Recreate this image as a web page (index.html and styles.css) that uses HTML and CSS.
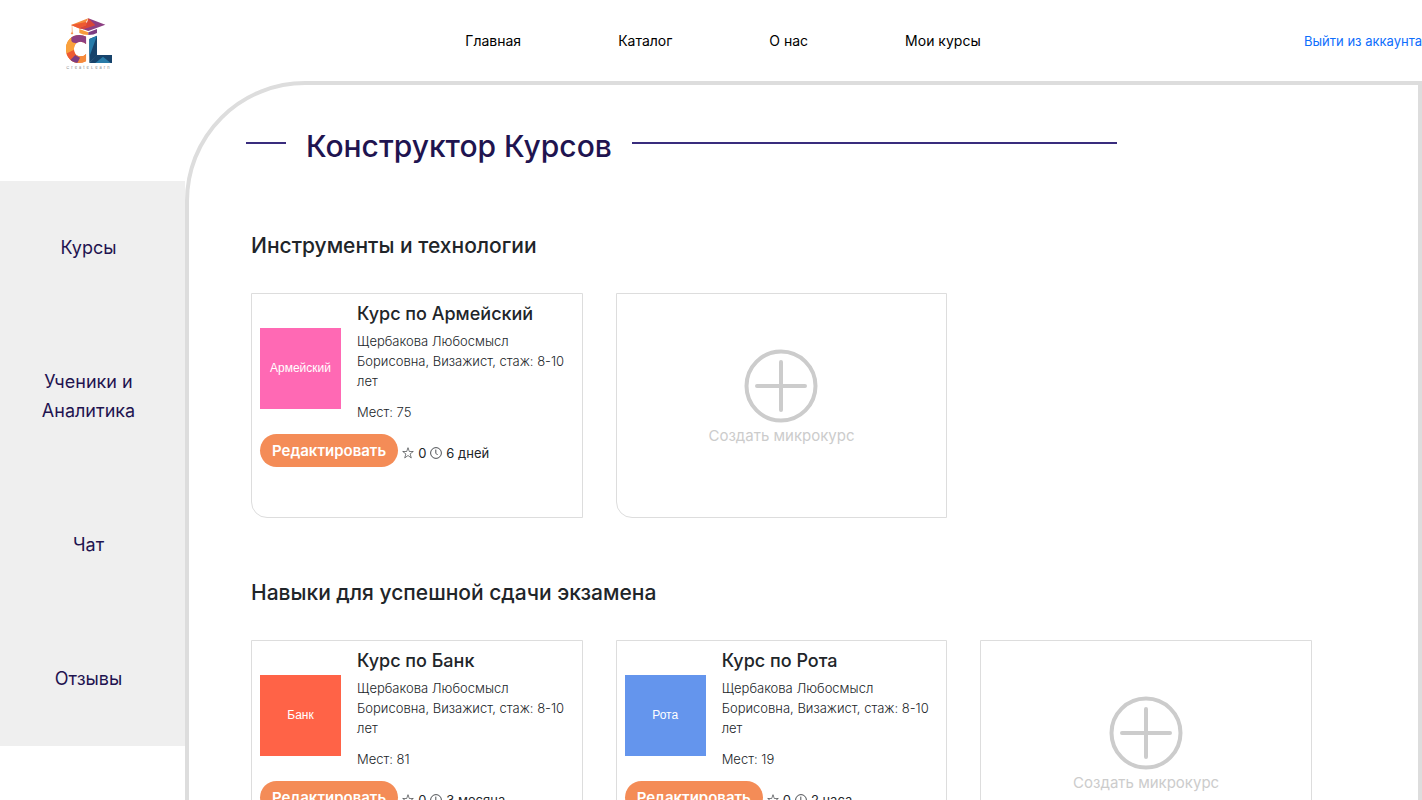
FILE: index.html
```
<!DOCTYPE html>
<html lang="ru">
<head>
<meta charset="utf-8">
<meta name="viewport" content="width=device-width, initial-scale=1">
<title>Конструктор Курсов</title>
<link rel="stylesheet" href="styles.css">
</head>
<body>
<svg class="sprite" aria-hidden="true">
  <symbol id="star" viewBox="0 0 12 12"><path d="M6 .7 7.3 4.5H11.3L8.1 6.9 9.3 10.9 6 8.500 2.700 10.900 3.900 6.900.7 4.500H4.700Z" fill="none" stroke="currentColor" stroke-width=".6"/></symbol>
  <symbol id="clock" viewBox="0 0 12 12"><circle cx="6" cy="6" r="5.4" fill="none" stroke="currentColor" stroke-width=".8"/><path d="M5.8 2.6V6.2L7.6 8" fill="none" stroke="currentColor" stroke-width=".8"/></symbol>
  <symbol id="plus" viewBox="0 0 74 74"><circle cx="37" cy="37" r="34.5" fill="none" stroke="currentColor" stroke-width="4"/><path d="M37 13V61M13 37H61" fill="none" stroke="currentColor" stroke-width="4" stroke-linecap="round"/></symbol>
</svg>

<header class="header">
  <a class="logo" href="#" aria-label="CreateLearn">
    <svg class="logo-mark" viewBox="48 29 138 135" aria-hidden="true">
      <defs><clipPath id="c"><path d="M109 85Q99 80 88 80C64 80 48 98 48 122C48 147 64 164 87 164Q99 164 109 158V136Q102 144 92 144C80 144 72 135 72 122C72 109 80 100 92 100Q102 100 109 108Z"/></clipPath></defs>
      <path d="M63 50 115 30 104 48 90 61Z" fill="#f58a3c"/>
      <path d="M63 50 108 41 118 51 90 61Z" fill="#ee5a32"/>
      <path d="M115 30 166 49 115 68 90 60 118 49Z" fill="#8d4083"/>
      <path d="M115 30 136 51 100 63 90 60 108 52Z" fill="#d94738"/>
      <path d="M88 62 115 72V80Q98 80 88 74Z" fill="#f99b3b"/>
      <path d="M115 72 141 62V74Q132 80 115 80Z" fill="#7c3c82"/>
      <path d="M66 51V70L63 77H69L67 70" fill="#f58a3c" stroke="#f58a3c" stroke-width="1"/>
      <g clip-path="url(#c)">
        <path d="M48 80H109V164H48Z" fill="#f47a35"/>
        <path d="M48 92 64 82 78 108 70 130 48 126Z" fill="#faa53d"/>
        <path d="M64 80H110V110L64 102Z" fill="#8e3f82"/>
        <path d="M48 100 62 96 74 110 64 130 48 140Z" fill="#f9a13c"/>
        <path d="M48 136 72 124 80 148 60 164H48Z" fill="#ee5a32"/>
        <path d="M62 160 80 140 109 130V164H62Z" fill="#f58a3c"/>
        <path d="M58 158 76 140 90 148 82 164H58Z" fill="#7c3c82"/>
      </g>
      <path d="M118 92 141 82V142L118 164Z" fill="#17436b"/>
      <path d="M118 92 141 82 118 145Z" fill="#267cab"/>
      <path d="M118 164 141 140H186V164Z" fill="#17436b"/>
      <path d="M136 164 159 145 182 164Z" fill="#287ba8"/>
    </svg>
    <span class="logo-name">CreateLearn</span>
  </a>
  <nav class="nav">
    <a href="#">Главная</a>
    <a href="#">Каталог</a>
    <a href="#">О нас</a>
    <a href="#">Мои курсы</a>
  </nav>
  <a class="logout" href="#">Выйти из аккаунта</a>
</header>

<div class="layout">
  <nav class="sidebar">
    <a href="#">Курсы</a>
    <a href="#">Ученики и Аналитика</a>
    <a href="#">Чат</a>
    <a href="#">Отзывы</a>
  </nav>
  <main class="main">
    <h1 class="title">Конструктор Курсов</h1>

    <section class="section">
      <h2>Инструменты и технологии</h2>
      <div class="cards">
        <article class="card">
          <div class="card-body">
            <div class="thumb pink">Армейский</div>
            <div class="info">
              <h3>Курс по Армейский</h3>
              <p>Щербакова Любосмысл Борисовна, Визажист, стаж: 8-10 лет</p>
              <p>Мест: 75</p>
            </div>
          </div>
          <div class="card-foot">
            <button class="edit" type="button">Редактировать</button>
            <div class="stats">
              <svg class="icon"><use href="#star"/></svg><span>0</span>
              <svg class="icon"><use href="#clock"/></svg><span>6 дней</span>
            </div>
          </div>
        </article>
        <button class="card create" type="button">
          <svg class="plus"><use href="#plus"/></svg>
          <span>Создать микрокурс</span>
        </button>
      </div>
    </section>

    <section class="section">
      <h2>Навыки для успешной сдачи экзамена</h2>
      <div class="cards">
        <article class="card">
          <div class="card-body">
            <div class="thumb red">Банк</div>
            <div class="info">
              <h3>Курс по Банк</h3>
              <p>Щербакова Любосмысл Борисовна, Визажист, стаж: 8-10 лет</p>
              <p>Мест: 81</p>
            </div>
          </div>
          <div class="card-foot">
            <button class="edit" type="button">Редактировать</button>
            <div class="stats">
              <svg class="icon"><use href="#star"/></svg><span>0</span>
              <svg class="icon"><use href="#clock"/></svg><span>3 месяца</span>
            </div>
          </div>
        </article>
        <article class="card">
          <div class="card-body">
            <div class="thumb blue">Рота</div>
            <div class="info">
              <h3>Курс по Рота</h3>
              <p>Щербакова Любосмысл Борисовна, Визажист, стаж: 8-10 лет</p>
              <p>Мест: 19</p>
            </div>
          </div>
          <div class="card-foot">
            <button class="edit" type="button">Редактировать</button>
            <div class="stats">
              <svg class="icon"><use href="#star"/></svg><span>0</span>
              <svg class="icon"><use href="#clock"/></svg><span>2 часа</span>
            </div>
          </div>
        </article>
        <button class="card create" type="button">
          <svg class="plus"><use href="#plus"/></svg>
          <span>Создать микрокурс</span>
        </button>
      </div>
    </section>
  </main>
</div>
</body>
</html>
```
FILE: styles.css
```
*, *::before, *::after { box-sizing: border-box; }
body {
  margin: 0;
  background: #fff;
  color: #212529;
  font-family: Inter, "Liberation Sans", sans-serif;
  font-size: 13px;
  line-height: 20px;
}
h1, h2, h3, p { margin: 0; }
a { text-decoration: none; color: inherit; }
button { font: inherit; border: 0; cursor: pointer; }
.sprite { display: none; }

.header {
  display: grid;
  grid-template-columns: 1fr auto 1fr;
  align-items: center;
  min-height: 81px;
  padding-left: 24px;
}
.logo {
  display: flex;
  flex-direction: column;
  align-items: center;
  justify-self: start;
  margin-left: 42px;
  padding-top: 8px;
}
.logo-mark { width: 46px; height: 45px; }
.logo-name {
  margin-top: 2px;
  color: #888;
  font-size: 4px;
  line-height: 6px;
  letter-spacing: 2px;
}
.nav {
  display: flex;
  gap: 97px;
  color: #000;
  font-size: 14px;
}
.logout { justify-self: end; color: #0d6efd; }

.layout {
  display: grid;
  grid-template-columns: 185px 1fr;
  align-items: start;
}
.sidebar {
  display: flex;
  flex-direction: column;
  align-items: center;
  gap: 105px;
  margin-top: 100px;
  padding: 52px 24px 53px 16px;
  background: #efefef;
  color: #1f1450;
  font-size: 18px;
  line-height: 29px;
  text-align: center;
}
.main {
  padding: 41px 106px 60px 62px;
  border: 4px solid #ddd;
  border-radius: 120px 0 0;
}
.title {
  display: flex;
  align-items: center;
  gap: 20px;
  margin: 0 195px 0 -5px;
  color: #1f1450;
  font-size: 30px;
  font-weight: 500;
  line-height: 40px;
  white-space: nowrap;
}
.title::before, .title::after {
  content: "";
  width: 40px;
  height: 2px;
  margin-bottom: 6px;
  background: #392c7d;
}
.title::after { flex: 1; }

.section { margin-top: 65px; }
.section h2 {
  margin-bottom: 32px;
  font-size: 21px;
  font-weight: 500;
  line-height: 30px;
}
.section + .section { margin-top: 60px; }
.cards {
  display: grid;
  grid-template-columns: repeat(3, 1fr);
  gap: 33px;
}
.card {
  min-height: 225px;
  padding: 8px;
  border: 1px solid #ddd;
  border-radius: 0 0 0 16px;
  background: #fff;
}
.card-body {
  display: flex;
  align-items: center;
  gap: 16px;
}
.thumb {
  display: flex;
  flex: none;
  align-items: center;
  justify-content: center;
  width: 81px;
  height: 81px;
  margin-top: 12px;
  color: #fff;
  font-family: "Liberation Sans", Arial, sans-serif;
  font-size: 12px;
}
.pink { background: #ff69b4; }
.red { background: #ff6347; }
.blue { background: #6495ed; }
.info h3 {
  margin-bottom: 5px;
  font-size: 18px;
  font-weight: 500;
  line-height: 24px;
}
.info p { font-weight: 300; }
.info p + p { margin-top: 11px; }
.card-foot {
  display: flex;
  align-items: center;
  gap: 4px;
  margin-top: 12px;
}
.stats {
  display: flex;
  align-items: center;
  gap: 4px;
  margin-top: 4px;
}
.edit {
  min-height: 33px;
  padding: 0 12px;
  border-radius: 17px;
  background: #f48c57;
  color: #fff;
  font-size: 15px;
  font-weight: 600;
}
.icon { width: 12px; height: 12px; }
.create {
  display: flex;
  flex-direction: column;
  align-items: center;
  justify-content: center;
  gap: 3px;
  padding-bottom: 24px;
  color: #ccc;
  font-size: 15px;
}
.plus { width: 74px; height: 74px; }
```
